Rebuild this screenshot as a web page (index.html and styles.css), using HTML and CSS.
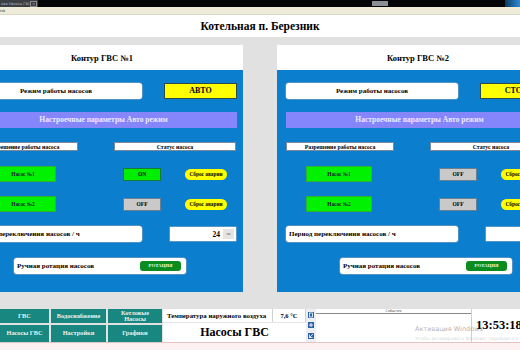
FILE: index.html
```html
<!DOCTYPE html>
<html lang="ru">
<head>
<meta charset="utf-8">
<title>Котельная п. Березник</title>
<link rel="stylesheet" href="styles.css">
</head>
<body>
<div class="screen">
  <div class="taskbar">
    <div class="task"><span class="task-text">ная Насосы ГВС</span><span class="task-x">×</span></div>
    <div class="tray-box"></div>
    <div class="tray-blue"></div>
  </div>
  <div class="menubar">на</div>
  <div class="header">Котельная п. Березник</div>

  <div class="main">
    <div class="panels">
      <div class="panel">
        <div class="panel-head">Контур ГВС №1</div>
        <div class="panel-body">
          <div class="row r-mode">
            <div class="label-box center">Режим работы насосов</div>
            <div class="mode-box">АВТО</div>
          </div>
          <div class="row r-band"><div class="band">Настроечные параметры Авто режим</div></div>
          <div class="row r-heads">
            <div class="head-box h-perm">Разрешение работы насоса</div>
            <div class="head-box h-stat">Статус насоса</div>
          </div>
          <div class="row r-pump1">
            <div class="pump">Насос №1</div>
            <div class="state on">ON</div>
            <div class="reset">Сброс аварии</div>
          </div>
          <div class="row r-pump2">
            <div class="pump">Насос №2</div>
            <div class="state off">OFF</div>
            <div class="reset">Сброс аварии</div>
          </div>
          <div class="row r-period">
            <div class="label-box left">Период переключения насосов / ч</div>
            <div class="input"><span class="val">24</span><span class="ok">ок</span></div>
          </div>
          <div class="row r-rot">
            <div class="rot-box first"><span>Ручная ротация насосов</span><div class="rot-btn">РОТАЦИЯ</div></div>
          </div>
        </div>
      </div>

      <div class="panel">
        <div class="panel-head">Контур ГВС №2</div>
        <div class="panel-body">
          <div class="row r-mode">
            <div class="label-box center">Режим работы насосов</div>
            <div class="mode-box">СТОП</div>
          </div>
          <div class="row r-band"><div class="band">Настроечные параметры Авто режим</div></div>
          <div class="row r-heads">
            <div class="head-box h-perm">Разрешение работы насоса</div>
            <div class="head-box h-stat">Статус насоса</div>
          </div>
          <div class="row r-pump1">
            <div class="pump">Насос №1</div>
            <div class="state off">OFF</div>
            <div class="reset">Сброс аварии</div>
          </div>
          <div class="row r-pump2">
            <div class="pump">Насос №2</div>
            <div class="state off">OFF</div>
            <div class="reset">Сброс аварии</div>
          </div>
          <div class="row r-period">
            <div class="label-box left">Период переключения насосов / ч</div>
            <div class="input"><span class="val">24</span><span class="ok">ок</span></div>
          </div>
          <div class="row r-rot">
            <div class="rot-box"><span>Ручная ротация насосов</span><div class="rot-btn">РОТАЦИЯ</div></div>
          </div>
        </div>
      </div>
    </div>
  </div>

  <div class="bottom">
    <div class="nav">
      <div class="nav-btn">ГВС</div>
      <div class="nav-btn">Водоснабжение</div>
      <div class="nav-btn two">Котловые<br>Насосы</div>
      <div class="nav-btn tall">Насосы ГВС</div>
      <div class="nav-btn tall">Настройки</div>
      <div class="nav-btn tall">Графики</div>
    </div>
    <div class="info">
      <div class="temp-row">
        <div class="temp-label">Температура наружного воздуха</div>
        <div class="temp-val">7,6 °C</div>
      </div>
      <div class="screen-name">Насосы ГВС</div>
    </div>
    <div class="icons">
      <div class="ic"><svg viewBox="0 0 6 6" width="6" height="6"><rect x="0" y="0" width="6" height="6" fill="#2d62a8"/><rect x="1.5" y="1" width="3" height="4" fill="none" stroke="#fff" stroke-width="0.8"/></svg></div>
      <div class="ic"><svg viewBox="0 0 6 6" width="6" height="6"><rect x="0" y="0" width="6" height="6" fill="#2d62a8"/><path d="M1 3h4M3 1v4" stroke="#fff" stroke-width="0.9"/></svg></div>
      <div class="ic"><svg viewBox="0 0 6 6" width="6" height="6"><rect x="0" y="0" width="6" height="6" fill="#2d62a8"/><path d="M1 5L5 1M1.5 1.5v3h3" stroke="#fff" stroke-width="0.8" fill="none"/></svg></div>
    </div>
    <div class="events">
      <div class="events-head">События</div>
    </div>
    <div class="clock">13:53:18</div>
  </div>
  <div class="status-strip"></div>

  <div class="watermark">
    <div class="wm1">Активация Windows</div>
    <div class="wm2">Чтобы активировать Windows, перейдите в раздел "Параметры".</div>
  </div>
</div>
</body>
</html>
```
FILE: styles.css
```css
* { box-sizing: border-box; }
html, body { margin: 0; padding: 0; }
body {
  width: 520px;
  height: 350px;
  overflow: hidden;
  font-family: "Liberation Serif", "Times New Roman", serif;
  background: #e1e1e1;
}
.screen {
  position: relative;
  width: 520px;
  height: 350px;
  overflow: hidden;
}

/* top */
.taskbar {
  height: 7px;
  background: #060606;
  display: flex;
  align-items: stretch;
}
.task {
  width: 38px;
  background: #3c3f44;
  display: flex;
  align-items: center;
  justify-content: space-between;
  padding: 0 1px;
  font-family: "DejaVu Sans", sans-serif;
  font-size: 3.5px;
  color: #b8bcc4;
  overflow: hidden;
  white-space: nowrap;
}
.task-x {
  border: 0.5px solid #888;
  padding: 0 1px;
  line-height: 4px;
}
.tray-box {
  margin-left: 334px;
  width: 16px;
  background: #8a8f96;
  margin-top: 1px;
  margin-bottom: 1px;
}
.tray-blue {
  margin-left: auto;
  width: 15px;
  background: linear-gradient(90deg, #0d3a60, #2d8ad8);
}
.menubar {
  height: 8px;
  background: #efedda;
  border-bottom: 1px solid #dcd9c6;
  font-family: "DejaVu Sans", sans-serif;
  font-size: 4px;
  line-height: 7px;
  color: #333;
}
.header {
  height: 22px;
  background: #ffffff;
  text-align: center;
  font-weight: bold;
  font-size: 11.5px;
  line-height: 22px;
  color: #000;
}

/* main */
.main {
  height: 270px;
  background: #e1e1e1;
  padding-top: 8px;
  overflow: hidden;
}
.panels {
  display: flex;
  gap: 34px;
  margin-left: -39px;
  width: 600px;
}
.panel {
  flex: none;
  width: 282px;
}
.panel-head {
  height: 25px;
  background: #ffffff;
  text-align: center;
  font-weight: bold;
  font-size: 8.5px;
  line-height: 27px;
}
.panel-body {
  height: 222px;
  background: #0b7fce;
  padding: 13px 6px 0 9px;
}
.row {
  display: flex;
  align-items: center;
}
.r-band { margin-top: 13px; }
.r-heads { margin-top: 14px; }
.r-pump1 { margin-top: 15px; }
.r-pump2 { margin-top: 14px; }
.r-period { margin-top: 14px; }
.r-rot { margin-top: 16px; }

.label-box {
  width: 172px;
  height: 16px;
  background: #fff;
  border-radius: 3px;
  box-shadow: 0 0 0 0.5px #9aa8b8;
  font-weight: bold;
  font-size: 7px;
  line-height: 16px;
  white-space: nowrap;
  overflow: hidden;
}
.label-box.center { text-align: center; }
.label-box.left { padding-left: 3px; }
.mode-box {
  margin-left: 22px;
  width: 73px;
  height: 16px;
  background: #ffff00;
  border: 1px solid #2e4a4a;
  text-align: center;
  font-weight: bold;
  font-size: 8px;
  line-height: 14px;
}
.band {
  width: 267px;
  height: 16px;
  background: #8585fc;
  color: #ececff;
  text-align: center;
  font-weight: bold;
  font-size: 7.5px;
  line-height: 16px;
}
.head-box {
  height: 9px;
  background: #fff;
  border: 0.5px solid #7a8a9a;
  text-align: center;
  font-weight: bold;
  font-size: 5.8px;
  line-height: 8px;
  white-space: nowrap;
  overflow: hidden;
}
.h-perm { width: 108px; }
.h-stat { width: 122px; margin-left: 36px; }

.pump {
  margin-left: 20px;
  width: 66px;
  height: 16px;
  background: #00f200;
  border: 0.5px solid #30b030;
  text-align: center;
  font-weight: bold;
  font-size: 5.3px;
  line-height: 15px;
  color: #123;
}
.state {
  margin-left: 67px;
  width: 38px;
  height: 13px;
  border: 1px solid #2a6a7a;
  text-align: center;
  font-weight: bold;
  font-size: 5.5px;
  line-height: 11px;
}
.state.on { background: #00ee00; border-color: #1a7a3a; }
.state.off { background: #c9c9c9; border-color: #6a8090; }
.reset {
  margin-left: 24px;
  width: 42px;
  height: 11px;
  background: #ffff00;
  border-radius: 6px;
  text-align: center;
  font-weight: bold;
  font-size: 5.3px;
  line-height: 11px;
  white-space: nowrap;
}
.input {
  margin-left: 28px;
  width: 66px;
  height: 14px;
  background: #fff;
  box-shadow: 0 0 0 0.5px #a0b0c0;
  display: flex;
  align-items: center;
  justify-content: flex-end;
  padding-right: 2px;
}
.input .val {
  font-weight: bold;
  font-size: 7.5px;
  margin-right: 3px;
}
.input .ok {
  width: 11px;
  height: 10px;
  background: #e4e4e4;
  font-size: 4px;
  line-height: 10px;
  text-align: center;
  color: #555;
}
.rot-box {
  margin-left: 54px;
  width: 172px;
  height: 16px;
  background: #fff;
  border-radius: 3px;
  box-shadow: 0 0 0 0.5px #9aa8b8;
  display: flex;
  align-items: center;
  justify-content: space-between;
  padding: 0 5px 0 3px;
  font-weight: bold;
  font-size: 7px;
}
.rot-box.first { margin-left: 44px; }
.rot-btn {
  width: 41px;
  height: 10px;
  background: #0a8c1e;
  border-radius: 3px;
  color: #e8ffe8;
  font-size: 4.8px;
  line-height: 10px;
  text-align: center;
}

/* bottom */
.bottom {
  height: 35px;
  background: #e1e1e1;
  display: flex;
}
.nav {
  flex: none;
  display: grid;
  grid-template-columns: 49px 55px 54px;
  grid-template-rows: 14px 17px;
  gap: 2px;
  padding-top: 2px;
  width: 162px;
}
.nav-btn {
  background: #17877f;
  color: #e6f2f0;
  font-weight: bold;
  font-size: 6.3px;
  display: flex;
  align-items: center;
  justify-content: center;
  text-align: center;
  line-height: 6.5px;
  white-space: nowrap;
}
.info {
  flex: none;
  margin-left: 1px;
  margin-top: 2px;
  width: 143px;
  background: #fff;
}
.temp-row {
  display: flex;
  height: 14px;
  border-bottom: 1px solid #e4e4e4;
}
.temp-label {
  width: 110px;
  padding-left: 4px;
  font-weight: bold;
  font-size: 6.8px;
  line-height: 14px;
  white-space: nowrap;
  overflow: hidden;
  border-right: 1px solid #d0d0d0;
}
.temp-val {
  flex: 1;
  text-align: center;
  font-weight: bold;
  font-size: 6.5px;
  line-height: 14px;
  border-right: 1px solid #d0d0d0;
}
.screen-name {
  text-align: center;
  font-weight: bold;
  font-size: 12px;
  line-height: 18px;
}
.icons {
  flex: none;
  width: 10px;
  margin-top: 2px;
  background: #eceef2;
  display: flex;
  flex-direction: column;
  align-items: center;
  justify-content: space-around;
  padding: 1px 0;
}
.ic { width: 6px; height: 6px; line-height: 0; }
.events {
  flex: none;
  width: 156px;
  margin-top: 2px;
  background: #fff;
  border-right: 1px solid #cfcfcf;
}
.events-head {
  height: 5px;
  border-bottom: 1.5px solid #8a8a8a;
  font-family: "DejaVu Sans", sans-serif;
  font-size: 3.5px;
  line-height: 5px;
  text-align: center;
  color: #555;
}
.clock {
  flex: 1;
  margin-top: 2px;
  background: #fff;
  font-weight: bold;
  font-size: 12.5px;
  line-height: 33px;
  padding-left: 4px;
  white-space: nowrap;
}
.status-strip {
  height: 8px;
  background: #fcf0f0;
  border-top: 1px solid #e6c4c4;
}

.watermark {
  position: absolute;
  left: 415px;
  top: 325px;
  font-family: "DejaVu Sans", sans-serif;
  color: rgba(110, 110, 110, 0.55);
  white-space: nowrap;
  pointer-events: none;
}
.wm1 { font-size: 6.5px; line-height: 8px; }
.wm2 { font-size: 4.5px; line-height: 7px; margin-top: 2px; color: rgba(120, 120, 120, 0.35); }
```
